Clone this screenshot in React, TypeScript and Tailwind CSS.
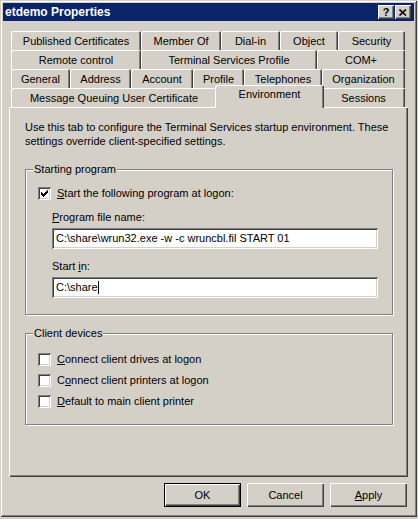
const raised =
  "shadow-[inset_1px_1px_0_#ffffff,inset_-1px_-1px_0_#404040,inset_-2px_-2px_0_#808080]";
const frame =
  "shadow-[inset_1px_1px_0_#d4d0c8,inset_-1px_-1px_0_#404040,inset_2px_2px_0_#ffffff,inset_-2px_-2px_0_#808080]";
const sunken =
  "shadow-[inset_1px_1px_0_#808080,inset_-1px_-1px_0_#ffffff,inset_2px_2px_0_#404040,inset_-2px_-2px_0_#d4d0c8]";
const tabEdge =
  "shadow-[inset_1px_1px_0_#ffffff,inset_-1px_0_0_#404040,inset_-2px_0_0_#808080]";

type Tab = { label: string; w: string };

const rows: Tab[][] = [
  [
    { label: "Published Certificates", w: "w-[130px]" },
    { label: "Member Of", w: "w-[80px]" },
    { label: "Dial-in", w: "w-[59px]" },
    { label: "Object", w: "w-[58px]" },
    { label: "Security", w: "w-[67px]" },
  ],
  [
    { label: "Remote control", w: "w-[130px]" },
    { label: "Terminal Services Profile", w: "w-[176px]" },
    { label: "COM+", w: "w-[88px]" },
  ],
  [
    { label: "General", w: "w-[59px]" },
    { label: "Address", w: "w-[61px]" },
    { label: "Account", w: "w-[62px]" },
    { label: "Profile", w: "w-[51px]" },
    { label: "Telephones", w: "w-[78px]" },
    { label: "Organization", w: "w-[83px]" },
  ],
];

function TabButton({ label, w }: Tab) {
  return (
    <div
      className={`${w} h-[19px] shrink-0 rounded-t-[2px] bg-[#d4d0c8] pt-[4px] text-center leading-[13px] ${tabEdge}`}
    >
      {label}
    </div>
  );
}

function CheckBox({ checked }: { checked?: boolean }) {
  return (
    <div className={`w-[13px] h-[13px] shrink-0 bg-white p-[2px] ${sunken}`}>
      {checked && (
        <svg width="9" height="9" viewBox="0 0 9 9" className="block">
          <rect x="1" y="3" width="1" height="3" fill="#000" />
          <rect x="2" y="4" width="1" height="3" fill="#000" />
          <rect x="3" y="5" width="1" height="3" fill="#000" />
          <rect x="4" y="4" width="1" height="3" fill="#000" />
          <rect x="5" y="3" width="1" height="3" fill="#000" />
          <rect x="6" y="2" width="1" height="3" fill="#000" />
          <rect x="7" y="1" width="1" height="3" fill="#000" />
        </svg>
      )}
    </div>
  );
}

function Field({ value, caret }: { value: string; caret?: boolean }) {
  return (
    <div
      className={`ml-[26px] w-[326px] h-[21px] bg-white pl-[4px] flex items-center leading-[13px] ${sunken}`}
    >
      <span>{value}</span>
      {caret && <span className="w-px h-[13px] bg-black" />}
    </div>
  );
}

function Group({ title, children, pb }: { title: string; children: React.ReactNode; pb: string }) {
  return (
    <fieldset
      className={`w-[368px] border border-[#808080] ${pb} shadow-[inset_1px_1px_0_#ffffff,1px_1px_0_#ffffff]`}
    >
      <legend className="ml-[7px] px-[1px] bg-[#d4d0c8] leading-[13px]">{title}</legend>
      {children}
    </fieldset>
  );
}

function Option({ checked, children, mt }: { checked?: boolean; children: React.ReactNode; mt: string }) {
  return (
    <div className={`${mt} ml-[12px] flex items-center gap-[6px] h-[13px] leading-[13px]`}>
      <CheckBox checked={checked} />
      <span>{children}</span>
    </div>
  );
}

function Btn({ children, def }: { children: React.ReactNode; def?: boolean }) {
  return (
    <div
      className={`w-[77px] h-[24px] flex items-center justify-center ${def ? "border border-black" : ""}`}
    >
      <div className={`w-full h-full flex items-center justify-center ${raised}`}>{children}</div>
    </div>
  );
}

export default function App() {
  return (
    <div className="w-[418px] h-[519px] bg-[#d4d0c8] text-[11px] text-black font-['Liberation_Sans',Arial,sans-serif] select-none">
      <div className={`w-[417px] h-[517px] p-[3px] flex flex-col ${frame}`}>
        <div className="h-[18px] bg-[#0a246a] flex items-center justify-between pl-[2px] pr-[3px]">
          <span className="text-white font-bold text-[12px] leading-[14px]">etdemo Properties</span>
          <div className="flex gap-[1px]">
            <div className={`w-[16px] h-[14px] bg-[#d4d0c8] flex items-center justify-center font-bold text-[11px] leading-none ${raised}`}>
              ?
            </div>
            <div className={`w-[16px] h-[14px] bg-[#d4d0c8] flex items-center justify-center ${raised}`}>
              <svg width="8" height="7" viewBox="0 0 8 7">
                <path d="M0.5 0.5 L7 6.5 M7 0.5 L0.5 6.5" stroke="#000" strokeWidth="1.6" />
              </svg>
            </div>
          </div>
        </div>

        <div className="px-[6px] flex flex-col">
          <div className="mt-[10px] ml-[2px] flex flex-col">
            {rows.map((r, i) => (
              <div key={i} className="flex h-[19px]">
                {r.map((t) => (
                  <TabButton key={t.label} {...t} />
                ))}
              </div>
            ))}
            <div className="flex h-[19px] items-start">
              <TabButton label="Message Queuing User Certificate" w="w-[206px]" />
              <div
                className={`relative z-10 -mt-[3px] -ml-[2px] -mr-[2px] w-[109px] h-[23px] shrink-0 rounded-t-[2px] bg-[#d4d0c8] pt-[3px] text-center leading-[13px] ${tabEdge}`}
              >
                Environment
              </div>
              <TabButton label="Sessions" w="w-[83px]" />
            </div>
          </div>

          <div className={`w-[399px] h-[370px] pt-[13px] pl-[16px] flex flex-col ${raised}`}>
            <p className="leading-[14px]">
              Use this tab to configure the Terminal Services startup environment. These
              <br />
              settings override client-specified settings.
            </p>

            <div className="mt-[15px]">
              <Group title="Starting program" pb="pb-[16px]">
                <Option checked mt="mt-[11px]">
                  <span className="underline">S</span>tart the following program at logon:
                </Option>
                <div className="mt-[11px] ml-[26px] leading-[13px]">
                  <span className="underline">P</span>rogram file name:
                </div>
                <div className="mt-[4px]">
                  <Field value="C:\share\wrun32.exe -w -c wruncbl.fil START 01" />
                </div>
                <div className="mt-[11px] ml-[26px] leading-[13px]">
                  Start <span className="underline">i</span>n:
                </div>
                <div className="mt-[4px]">
                  <Field value="C:\share" caret />
                </div>
              </Group>
            </div>

            <div className="mt-[12px]">
              <Group title="Client devices" pb="pb-[16px]">
                <Option mt="mt-[13px]">
                  <span className="underline">C</span>onnect client drives at logon
                </Option>
                <Option mt="mt-[8px]">
                  C<span className="underline">o</span>nnect client printers at logon
                </Option>
                <Option mt="mt-[8px]">
                  <span className="underline">D</span>efault to main client printer
                </Option>
              </Group>
            </div>
          </div>

          <div className="mt-[6px] flex justify-end gap-[6px] pr-[1px]">
            <Btn def>OK</Btn>
            <Btn>Cancel</Btn>
            <Btn>
              <span>
                <span className="underline">A</span>pply
              </span>
            </Btn>
          </div>
        </div>
      </div>
    </div>
  );
}
